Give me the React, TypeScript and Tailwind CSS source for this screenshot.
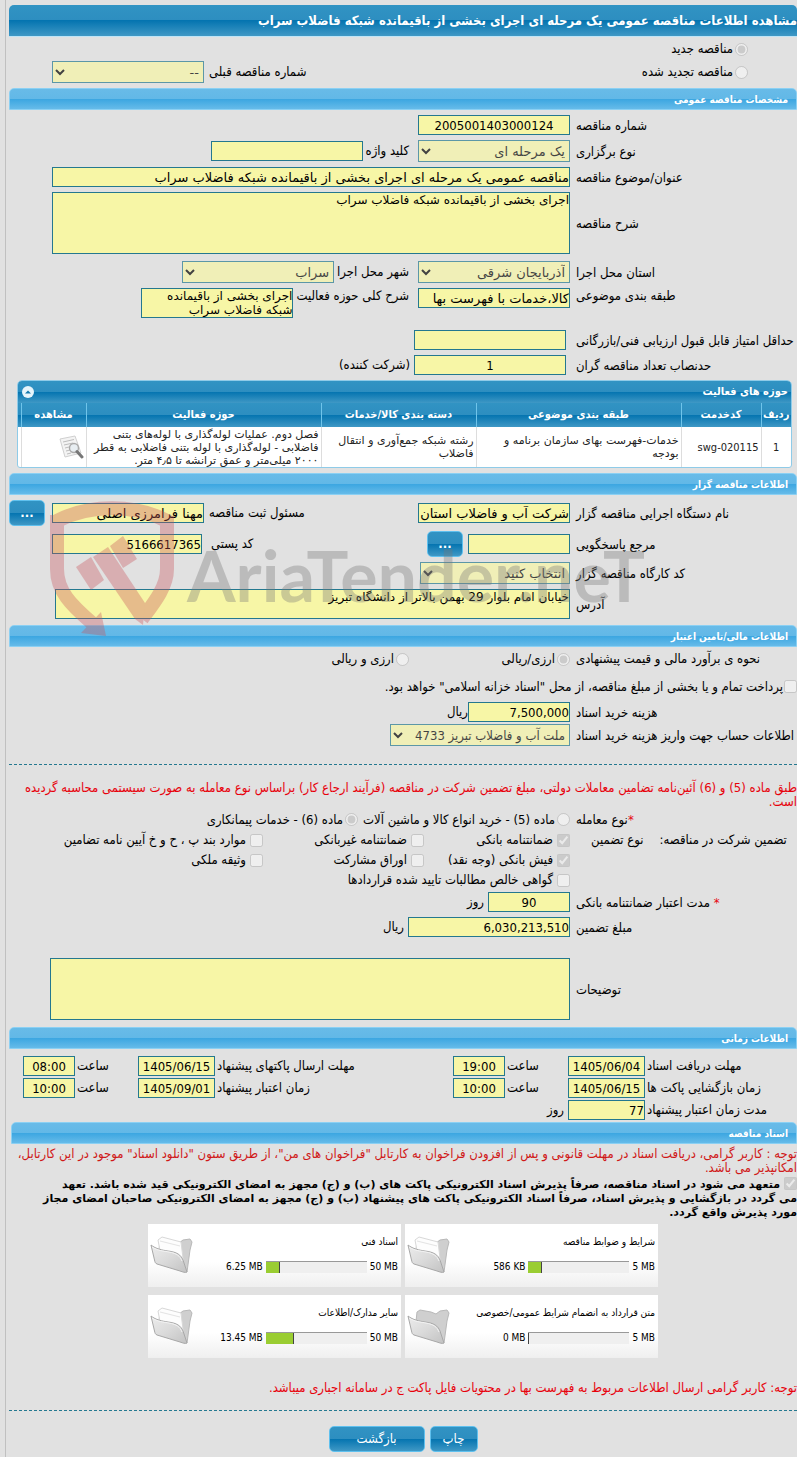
import type { ReactNode } from 'react'
import clsx from 'clsx'

const wide = "font-['DejaVu_Sans',sans-serif]"
const field =
  'h-5 border border-[#24788f] bg-[#f7f6a6] px-0 py-0 text-[13px] leading-[18px] text-black outline-none rounded-none'
const area =
  "block resize-none overflow-hidden border border-[#24788f] bg-[#f7f6a6] p-0 font-['DejaVu_Sans',sans-serif] text-[12px] leading-[14px] text-black outline-none rounded-none"
const selectBox =
  'h-[22px] border border-[#24788f] bg-[#f7f6a6] p-0 text-[13px] text-black opacity-70 rounded-none'
const glossy =
  'bg-[linear-gradient(to_bottom,#3193c3_0%,#2d8ec0_50%,#0474b0_50%,#3f98c5_100%)]'

const files = [
  { title: 'شرایط و ضوابط مناقصه', used: '586 KB', max: '5 MB', percent: 13 },
  { title: 'اسناد فنی', used: '6.25 MB', max: '50 MB', percent: 14 },
  { title: 'متن قرارداد به انضمام شرایط عمومی/خصوصی', used: '0 MB', max: '5 MB', percent: 1 },
  { title: 'سایر مدارک/اطلاعات', used: '13.45 MB', max: '50 MB', percent: 28 },
]

const SectionBar = ({ children }: { children: ReactNode }) => (
  <h2 className="h-[22px] rounded-t-[5px] border border-[#8bd0f3] bg-[linear-gradient(to_bottom,#68bbe8_0%,#62b8e7_50%,#3ba6e1_50%,#66bbe9_100%)] pr-2 text-[10px] font-bold leading-[22px] text-white">
    {children}
  </h2>
)

/* Label column plus whatever sits beside it */
const Row = ({ label, id, children, top = false, required = false }: {
  label: string
  id?: string
  children: ReactNode
  top?: boolean
  required?: boolean
}) => (
  <div className={clsx('flex', top ? 'items-start' : 'items-center')}>
    <label htmlFor={id} className="w-[227px] shrink-0 whitespace-nowrap pl-[6px] pt-px text-left">
      {required && <span className="text-red-600">* </span>}
      {label}
    </label>
    {children}
  </div>
)

const Option = ({ type, name, label, checked = false, className, gap = 'gap-[2px]' }: {
  type: 'radio' | 'checkbox'
  name: string
  label: string
  checked?: boolean
  className?: string
  gap?: string
}) => (
  <label className={clsx('flex shrink-0 items-center whitespace-nowrap', gap, className)}>
    <input type={type} name={name} defaultChecked={checked} disabled className="m-0 size-[13px] shrink-0" />
    {label}
  </label>
)

const Button = ({ children, className }: { children: ReactNode; className?: string }) => (
  <button
    type="button"
    className={clsx('h-[26px] shrink-0 rounded-[5px] border border-[#5fc0ee] text-[13px] leading-5 text-white', glossy, className)}
  >
    {children}
  </button>
)

const SearchDoc = () => (
  <svg width="26" height="24" viewBox="0 0 26 24" fill="none">
    <path d="M2 4L17 1L23 18L7 22Z" fill="#f3f3f3" stroke="#d0d0d0" />
    <path d="M5 7L16 4.5M6 10L15 8M7 13L13 11.5M8 16L12 15M9 19L13 18" stroke="#bdbdbd" />
    <circle cx="16" cy="13" r="4.5" fill="#e8eef2" stroke="#aaaaaa" strokeWidth="1.4" />
    <path d="M19 16.5L24 22" stroke="#777777" strokeWidth="3" strokeLinecap="round" />
  </svg>
)

const Folder = ({ id, empty = false }: { id: string; empty?: boolean }) => (
  <svg width="43" height="38" viewBox="0 0 43 38" fill="none" className="shrink-0">
    <defs>
      <linearGradient id={id} x1="0" y1="0" x2="1" y2="1">
        <stop offset="0" stopColor="#ececec" />
        <stop offset="0.5" stopColor="#dadada" />
        <stop offset="1" stopColor="#c2c2c2" />
      </linearGradient>
    </defs>
    <path d="M10 5L13 3L24 5L29 7L33 4L40 3L42 6L40 14L37 36L33 35L8 24Z" fill="#cfcfcf" stroke="#b8b8b8" />
    {!empty && (
      <>
        <path d="M8 4L12 1L31 6L34 30L11 20Z" fill="#fdfdfd" stroke="#d8d8d8" />
        <path d="M10 5L30 10" stroke="#e3e3e3" />
      </>
    )}
    <path d="M1 9C6 13 12 14 18 15C27 16 31 19 33 24L37 36C35 37 33 36 30 35L7 28C5 27 5 26 4.500 24Z" fill={`url(#${id})`} stroke="#a8a8a8" />
    <path d="M2 11C8 15 14 15 19 16C27 17.500 30 20 32 25" stroke="#f4f4f4" />
  </svg>
)

const FileCard = ({ title, used, max, percent, id }: (typeof files)[number] & { id: string }) => (
  <div className="flex h-[63px] items-start justify-between bg-[linear-gradient(to_bottom,#ffffff_0%,#ffffff_60%,#efefef_100%)] pr-[3px] pl-[2px] text-[10px] leading-3">
    <div className="flex flex-col gap-[13px] pt-3">
      <span className="whitespace-nowrap">{title}</span>
      <div className="flex items-center gap-[3px]">
        <span dir="ltr">{max}</span>
        <div dir="ltr" className="h-3 w-[101px] border-t border-[#999999] bg-[#efefef]">
          <div className="h-[11px] border-r border-[#444444] bg-[#9acd32]" style={{ width: `${percent}%` }} />
        </div>
        <span dir="ltr">{used}</span>
      </div>
    </div>
    <div className="pt-3">
      <Folder id={id} empty={percent < 2} />
    </div>
  </div>
)

const Watermark = () => (
  <div
    dir="ltr"
    aria-hidden="true"
    className="pointer-events-none absolute top-[22px] left-[40px] flex items-start text-[#777777] opacity-35"
  >
    <svg width="128" height="142" viewBox="0 0 128 142" fill="none">
      <path
        d="M8 26C40 9 86 9 118 26V74C118 92 105 108 93 124M8 20V74C8 96 22 110 43 128"
        stroke="#c8525a"
        strokeWidth="14"
      />
      <path d="M32 138L52 117L57 141Z" fill="#c8525a" />
      <path d="M27 72L42 62L55 85L42 95Z" fill="#c8525a" />
      <path d="M44 62L59 52L96 108L94 130L86 124Z" fill="#c8525a" />
      <path d="M61 51L74 41L88 64L74 73Z" fill="#c8525a" />
    </svg>
    <span className="mt-10 ml-[10px] font-['Lato',sans-serif] text-[70px] font-bold leading-[80px]">
      AriaTender.neT
    </span>
  </div>
)

export default function App() {
  return (
    <div
      dir="rtl"
      className="min-h-screen overflow-x-clip bg-[#e1e1e1] pl-[5px] font-['DejaVu_Sans_Condensed','DejaVu_Sans',sans-serif] text-[13px] leading-[14px] text-black"
    >
      <main className="border-l border-[#c0c0c0] pt-[5px] pl-[3px]">
        <h1 className={clsx('h-8 whitespace-nowrap rounded-t-[5px] border-b border-[#bfe4f6] text-[13px] font-bold leading-[32px] text-white', glossy)}>
          مشاهده اطلاعات مناقصه عمومی یک مرحله ای اجرای بخشی از باقیمانده شبکه فاضلاب سراب
        </h1>

        {/* Tender kind */}
        <div className="flex items-end pt-[5px] pb-[5px] pl-[43px]">
          <div className="flex flex-1 flex-col gap-[9px] pr-[49px] pb-[4px]">
            <Option type="radio" name="kind" label="مناقصه جدید" checked />
            <Option type="radio" name="kind" label="مناقصه تجدید شده" />
          </div>
          <div className="flex items-center gap-[5px]">
            <label htmlFor="prev">شماره مناقصه قبلی</label>
            <select id="prev" disabled className={clsx(selectBox, wide, 'w-[152px]')}>
              <option>--</option>
            </select>
          </div>
        </div>

        <SectionBar>مشخصات مناقصه عمومی</SectionBar>
        <div className="flex flex-col gap-[5px] py-[5px]">
          <Row label="شماره مناقصه" id="number">
            <input id="number" defaultValue="2005001403000124" className={clsx(field, 'w-[152px] text-center')} />
          </Row>
          <Row label="نوع برگزاری" id="method">
            <select id="method" disabled className={clsx(selectBox, wide, 'w-[152px]')}>
              <option>یک مرحله ای</option>
            </select>
            <label htmlFor="keyword" className="mr-[9px] ml-[3px]">کلید واژه</label>
            <input id="keyword" className={clsx(field, 'w-[152px]')} />
          </Row>
          <Row label="عنوان/موضوع مناقصه" id="subject">
            <input
              id="subject"
              defaultValue="مناقصه عمومی یک مرحله ای اجرای بخشی از باقیمانده شبکه فاضلاب سراب"
              className={clsx(field, wide, 'ml-[43px] min-w-0 flex-1')}
            />
          </Row>
          <Row label="شرح مناقصه" id="desc">
            <textarea
              id="desc"
              defaultValue="اجرای بخشی از باقیمانده شبکه فاضلاب سراب"
              className={clsx(area, 'ml-[43px] h-[62px] min-w-0 flex-1')}
            />
          </Row>
          <div className="pt-[2px]">
            <Row label="استان محل اجرا" id="province">
              <select id="province" disabled className={clsx(selectBox, wide, 'w-[152px]')}>
                <option>آذربایجان شرقی</option>
              </select>
              <label htmlFor="city" className="mr-[9px] ml-[3px]">شهر محل اجرا</label>
              <select id="city" disabled className={clsx(selectBox, wide, 'w-[152px]')}>
                <option>سراب</option>
              </select>
            </Row>
          </div>
          <Row label="طبقه بندی موضوعی" id="category" top>
            <input id="category" defaultValue="کالا،خدمات با فهرست بها" className={clsx(field, wide, 'w-[152px]')} />
            <label htmlFor="scope" className="mr-[9px] ml-[3px] pt-px">شرح کلی حوزه فعالیت</label>
            <textarea
              id="scope"
              defaultValue="اجرای بخشی از باقیمانده شبکه فاضلاب سراب"
              className={clsx(area, 'h-[30px] w-[152px]')}
            />
          </Row>
          <div className="pt-[7px]">
            <Row label="حداقل امتیاز قابل قبول ارزیابی فنی/بازرگانی" id="score">
              <input id="score" className={clsx(field, 'mr-1 w-[152px]')} />
            </Row>
          </div>
          <Row label="حدنصاب تعداد مناقصه گران" id="quorum">
            <input id="quorum" defaultValue="1" className={clsx(field, 'mr-1 w-[152px] text-center')} />
            <span className="mr-1">(شرکت کننده)</span>
          </Row>

          {/* Activity areas */}
          <section className="mr-[5px] ml-2 overflow-hidden rounded-t-[5px] rounded-b-[3px] border border-[#8fcbe8] bg-white">
            <div className={clsx('flex h-[22px] items-center justify-between pr-[3px] pl-1 text-[11px] font-bold text-white', glossy)}>
              <span>حوزه های فعالیت</span>
              <button type="button" aria-label="بستن" className="size-3 rounded-full bg-[#e6f4fb]">
                <svg viewBox="0 0 12 12" className="size-3">
                  <path d="M3 7.500L6 4.500L9 7.500Z" fill="#1478ad" />
                </svg>
              </button>
            </div>
            <table className="w-full table-fixed border-collapse">
              <colgroup>
                <col className="w-[30px]" />
                <col className="w-[80px]" />
                <col className="w-[205px]" />
                <col className="w-[155px]" />
                <col />
                <col className="w-[65px]" />
                <col className="w-[3px]" />
              </colgroup>
              <thead className={glossy}>
                <tr className="h-6 text-[11px] font-bold text-white [&>th]:border-l [&>th]:border-[#6fc4ea] [&>th]:p-0 [&>th:last-child]:border-l-0">
                  <th className="whitespace-nowrap">ردیف</th>
                  <th>کدخدمت</th>
                  <th>طبقه بندی موضوعی</th>
                  <th>دسته بندی کالا/خدمات</th>
                  <th>حوزه فعالیت</th>
                  <th>مشاهده</th>
                  <th></th>
                </tr>
              </thead>
              <tbody>
                <tr className="h-[40px] whitespace-nowrap text-[11px] leading-[13px] text-[#222222] [&>td]:border-l [&>td]:border-[#dddddd] [&>td]:px-[2px] [&>td]:py-0 [&>td:last-child]:border-l-0">
                  <td className="text-center">1</td>
                  <td>swg-020115</td>
                  <td className={wide}>خدمات-فهرست بهای سازمان برنامه و<br />بودجه</td>
                  <td className={wide}>رشته شبکه جمع‌آوری و انتقال<br />فاضلاب</td>
                  <td className={wide}>
                    فصل دوم. عملیات لوله‌گذاری با لوله‌های بتنی<br />
                    فاضلابی - لوله‌گذاری با لوله بتنی فاضلابی به قطر<br />
                    ۲۰۰۰ میلی‌متر و عمق ترانشه تا ۴٫۵ متر.
                  </td>
                  <td><SearchDoc /></td>
                  <td></td>
                </tr>
              </tbody>
            </table>
          </section>
        </div>

        <div className="relative">
          <SectionBar>اطلاعات مناقصه گزار</SectionBar>
          <div className="flex flex-col gap-[5px] pt-[5px] pb-[6px]">
            <Row label="نام دستگاه اجرایی مناقصه گزار" id="agency">
              <input id="agency" defaultValue="شرکت آب و فاضلاب استان" className={clsx(field, wide, 'w-[152px]')} />
              <label htmlFor="officer" className="flex-1 pl-[5px] text-left">مسئول ثبت مناقصه</label>
              <input id="officer" defaultValue="مهنا فرامرزی اصلی" className={clsx(field, wide, 'w-[152px]')} />
              <Button className="mr-[7px] w-9 font-bold">...</Button>
            </Row>
            <Row label="مرجع پاسخگویی" id="contact">
              <input id="contact" className={clsx(field, 'w-[102px]')} />
              <Button className="mr-[5px] w-9 font-bold">...</Button>
              <label htmlFor="postal" className="flex-1 pl-[9px] text-left">کد پستی</label>
              <input id="postal" defaultValue="5166617365" className={clsx(field, 'ml-[43px] w-[150px]')} />
            </Row>
            <Row label="کد کارگاه مناقصه گزار" id="workshop">
              <select id="workshop" disabled className={clsx(selectBox, wide, 'w-[150px]')}>
                <option>انتخاب کنید</option>
              </select>
            </Row>
            <Row label="آدرس" id="address">
              <textarea
                id="address"
                defaultValue="خیابان امام بلوار 29 بهمن بالاتر از دانشگاه تبریز"
                className={clsx(area, 'ml-[46px] h-[30px] min-w-0 flex-1')}
              />
            </Row>
          </div>
          <SectionBar>اطلاعات مالی/تامین اعتبار</SectionBar>
          <Watermark />
        </div>

        <div className="flex h-6 items-center">
          <span className="w-[227px] shrink-0 pl-[6px] text-left">نحوه ی برآورد مالی و قیمت پیشنهادی</span>
          <Option type="radio" name="currency" label="ارزی/ریالی" checked className="w-[161px]" />
          <Option type="radio" name="currency" label="ارزی و ریالی" />
        </div>
        <Option
          type="checkbox"
          name="treasury"
          label={'پرداخت تمام و یا بخشی از مبلغ مناقصه، از محل "اسناد خزانه اسلامی" خواهد بود.'}
          className="h-[31px]"
          gap="gap-[1px]"
        />
        <div className="flex flex-col gap-[2px]">
          <Row label="هزینه خرید اسناد" id="fee">
            <input id="fee" defaultValue="7,500,000" dir="ltr" className={clsx(field, 'w-[102px] text-right')} />
            <span>ریال</span>
          </Row>
          <Row label="اطلاعات حساب جهت واریز هزینه خرید اسناد" id="account">
            <select id="account" disabled className={clsx(selectBox, 'w-[180px]')}>
              <option>ملت آب و فاضلاب تبریز 4733</option>
            </select>
          </Row>
        </div>

        <hr className="mt-[18px] border-t border-dashed border-[#24788f]" />

        <p className="mt-4 whitespace-nowrap text-red-600">
          طبق ماده (5) و (6) آئین‌نامه تضامین معاملات دولتی، مبلغ تضمین شرکت در مناقصه (فرآیند ارجاع کار) براساس نوع معامله به صورت سیستمی محاسبه گردیده
          <br />
          است.
        </p>

        {/* Guarantee */}
        <div className="flex h-[21px] items-center">
          <span className="w-[227px] shrink-0 pl-[6px] text-left"><span className="text-red-600">*</span>نوع معامله</span>
          <Option type="radio" name="deal" label="ماده (5) - خرید انواع کالا و ماشین آلات" className="w-[212px]" />
          <Option type="radio" name="deal" label="ماده (6) - خدمات پیمانکاری" checked />
        </div>
        <div className="flex">
          <div className="flex h-5 w-[227px] shrink-0 items-center justify-end gap-4 whitespace-nowrap pl-[21px]">
            <span>تضمین شرکت در مناقصه:</span>
            <span>نوع تضمین</span>
          </div>
          <div className="grid flex-1 auto-rows-[20px] grid-cols-[146px_161px_1fr]">
            <Option type="checkbox" name="g1" label="ضمانتنامه بانکی" checked gap="gap-1" />
            <Option type="checkbox" name="g2" label="ضمانتنامه غیربانکی" gap="gap-1" />
            <Option type="checkbox" name="g3" label="موارد بند پ ، ح و خ آیین نامه تضامین" gap="gap-1" />
            <Option type="checkbox" name="g4" label="فیش بانکی (وجه نقد)" checked gap="gap-1" />
            <Option type="checkbox" name="g5" label="اوراق مشارکت" gap="gap-1" />
            <Option type="checkbox" name="g6" label="وثیقه ملکی" gap="gap-1" />
            <Option type="checkbox" name="g7" label="گواهی خالص مطالبات تایید شده قراردادها" gap="gap-1" className="col-span-3" />
          </div>
        </div>
        <div className="flex flex-col gap-[5px] pt-[2px] pb-[7px]">
          <Row label="مدت اعتبار ضمانتنامه بانکی" id="validity" required>
            <input id="validity" defaultValue="90" className={clsx(field, 'w-[82px] text-center')} />
            <span className="mr-1">روز</span>
          </Row>
          <Row label="مبلغ تضمین" id="amount">
            <input id="amount" defaultValue="6,030,213,510" dir="ltr" className={clsx(field, 'w-[162px] text-right')} />
            <span className="mr-1">ریال</span>
          </Row>
          <div className="pt-4">
            <Row label="توضیحات" id="notes">
              <textarea id="notes" className={clsx(area, 'ml-[41px] h-[62px] min-w-0 flex-1')} />
            </Row>
          </div>
        </div>

        <SectionBar>اطلاعات زمانی</SectionBar>
        <div className="grid grid-cols-[150px_77px_59px_52px_1fr_77px_59px_52px] items-center gap-[2px] whitespace-nowrap pt-[7px] pb-[2px] pl-[14px] text-left">
          <label htmlFor="d1">مهلت دریافت اسناد</label>
          <input id="d1" defaultValue="1405/06/04" className={clsx(field, 'w-full text-center')} />
          <label htmlFor="t1">ساعت</label>
          <input id="t1" defaultValue="19:00" className={clsx(field, 'w-full text-center')} />
          <label htmlFor="d2">مهلت ارسال پاکتهای پیشنهاد</label>
          <input id="d2" defaultValue="1405/06/15" className={clsx(field, 'w-full text-center')} />
          <label htmlFor="t2">ساعت</label>
          <input id="t2" defaultValue="08:00" className={clsx(field, 'w-full text-center')} />

          <label htmlFor="d3">زمان بازگشایی پاکت ها</label>
          <input id="d3" defaultValue="1405/06/15" className={clsx(field, 'w-full text-center')} />
          <label htmlFor="t3">ساعت</label>
          <input id="t3" defaultValue="10:00" className={clsx(field, 'w-full text-center')} />
          <label htmlFor="d4">زمان اعتبار پیشنهاد</label>
          <input id="d4" defaultValue="1405/09/01" className={clsx(field, 'w-full text-center')} />
          <label htmlFor="t4">ساعت</label>
          <input id="t4" defaultValue="10:00" className={clsx(field, 'w-full text-center')} />

          <label htmlFor="days">مدت زمان اعتبار پیشنهاد</label>
          <input id="days" defaultValue="77" className={clsx(field, 'w-full text-right')} />
          <span className="pr-[2px] text-right">روز</span>
        </div>

        <div className="pl-[2px]">
          <SectionBar>اسناد مناقصه</SectionBar>
        </div>
        <p className="mt-[3px] whitespace-nowrap text-[#d01818]">
          توجه : کاربر گرامی، دریافت اسناد در مهلت قانونی و پس از افزودن فراخوان به کارتابل "فراخوان های من"، از طریق ستون "دانلود اسناد" موجود در این کارتابل،
          <br />
          امکانپذیر می باشد.
        </p>
        <label className={clsx('mt-[2px] block whitespace-nowrap text-[11px] font-bold', wide)}>
          <input type="checkbox" defaultChecked disabled className="m-0 ml-1 inline-block size-[13px] align-[-2px]" />
          متعهد می شود در اسناد مناقصه، صرفاً پذیرش اسناد الکترونیکی پاکت های (ب) و (ج) مجهز به امضای الکترونیکی قید شده باشد. تعهد
          <br />
          می گردد در بازگشایی و پذیرش اسناد، صرفاً اسناد الکترونیکی پاکت های پیشنهاد (ب) و (ج) مجهز به امضای الکترونیکی صاحبان امضای مجاز
          <br />
          مورد پذیرش واقع گردد.
        </label>

        {/* Attached documents */}
        <div className="mx-auto mt-1 grid w-[510px] grid-cols-2 gap-x-1 gap-y-2">
          {files.map((file, i) => (
            <FileCard key={file.title} id={`folder${i}`} {...file} />
          ))}
        </div>

        <p className="mt-[23px] whitespace-nowrap text-red-600">
          توجه: کاربر گرامی ارسال اطلاعات مربوط به فهرست بها در محتویات فایل پاکت ج در سامانه اجباری میباشد.
        </p>
        <hr className="mt-[15px] border-t border-dashed border-[#24788f]" />
        <div className="flex justify-center gap-[5px] pt-[15px] pb-[5px]">
          <Button className="w-12">چاپ</Button>
          <Button className="w-24">بازگشت</Button>
        </div>
      </main>
    </div>
  )
}
